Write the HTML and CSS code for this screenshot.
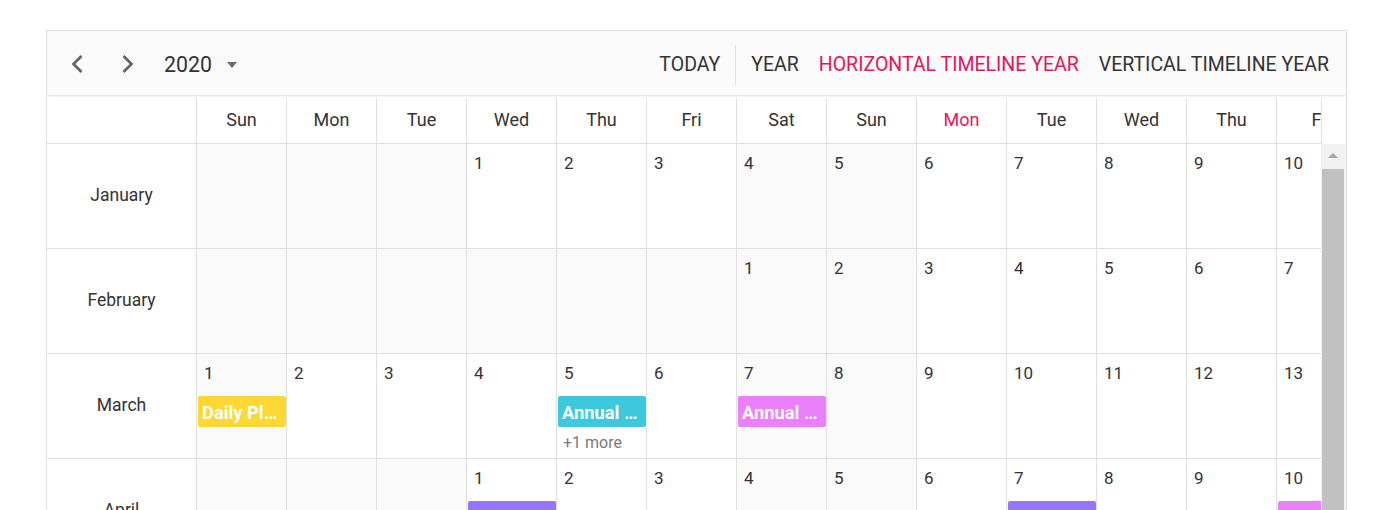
FILE: index.html
```html
<!DOCTYPE html>
<html>
<head>
<meta charset="utf-8">
<link rel="stylesheet" href="styles.css">
</head>
<body>
<div class="scheduler">
  <div class="toolbar">
    <div class="tb-left">
      <button class="icon-btn"><svg width="12" height="20" viewBox="0 0 12 20"><path d="M10.5 2 L2.5 10 L10.5 18" fill="none" stroke="#616161" stroke-width="2.6"/></svg></button>
      <button class="icon-btn"><svg width="12" height="20" viewBox="0 0 12 20"><path d="M1.5 2 L9.5 10 L1.5 18" fill="none" stroke="#616161" stroke-width="2.6"/></svg></button>
      <div class="date-range"><span class="year">2020</span><span class="caret"></span></div>
    </div>
    <div class="tb-right">
      <button class="tb-btn">TODAY</button>
      <span class="sep"></span>
      <button class="tb-btn">YEAR</button>
      <button class="tb-btn active">HORIZONTAL TIMELINE YEAR</button>
      <button class="tb-btn">VERTICAL TIMELINE YEAR</button>
    </div>
  </div>
  <div class="body">
    <div class="main">
      <div class="row header">
        <div class="label-cell"></div>
        <div class="day-head">Sun</div>
        <div class="day-head">Mon</div>
        <div class="day-head">Tue</div>
        <div class="day-head">Wed</div>
        <div class="day-head">Thu</div>
        <div class="day-head">Fri</div>
        <div class="day-head">Sat</div>
        <div class="day-head">Sun</div>
        <div class="day-head today">Mon</div>
        <div class="day-head">Tue</div>
        <div class="day-head">Wed</div>
        <div class="day-head">Thu</div>
        <div class="day-head">Fri</div>
      </div>
      <div class="row month">
        <div class="label-cell month-name">January</div>
        <div class="cell off"></div>
        <div class="cell off"></div>
        <div class="cell off"></div>
        <div class="cell"><span class="date">1</span></div>
        <div class="cell"><span class="date">2</span></div>
        <div class="cell"><span class="date">3</span></div>
        <div class="cell off"><span class="date">4</span></div>
        <div class="cell off"><span class="date">5</span></div>
        <div class="cell"><span class="date">6</span></div>
        <div class="cell"><span class="date">7</span></div>
        <div class="cell"><span class="date">8</span></div>
        <div class="cell"><span class="date">9</span></div>
        <div class="cell"><span class="date">10</span></div>
      </div>
      <div class="row month">
        <div class="label-cell month-name">February</div>
        <div class="cell off"></div>
        <div class="cell off"></div>
        <div class="cell off"></div>
        <div class="cell off"></div>
        <div class="cell off"></div>
        <div class="cell off"></div>
        <div class="cell off"><span class="date">1</span></div>
        <div class="cell off"><span class="date">2</span></div>
        <div class="cell"><span class="date">3</span></div>
        <div class="cell"><span class="date">4</span></div>
        <div class="cell"><span class="date">5</span></div>
        <div class="cell"><span class="date">6</span></div>
        <div class="cell"><span class="date">7</span></div>
      </div>
      <div class="row month">
        <div class="label-cell month-name">March</div>
        <div class="cell off"><span class="date">1</span><div class="event yellow">Daily Planning Meeting</div></div>
        <div class="cell"><span class="date">2</span></div>
        <div class="cell"><span class="date">3</span></div>
        <div class="cell"><span class="date">4</span></div>
        <div class="cell"><span class="date">5</span><div class="event cyan">Annual Conference</div><div class="more">+1 more</div></div>
        <div class="cell"><span class="date">6</span></div>
        <div class="cell off"><span class="date">7</span><div class="event pink">Annual Conference</div></div>
        <div class="cell off"><span class="date">8</span></div>
        <div class="cell"><span class="date">9</span></div>
        <div class="cell"><span class="date">10</span></div>
        <div class="cell"><span class="date">11</span></div>
        <div class="cell"><span class="date">12</span></div>
        <div class="cell"><span class="date">13</span></div>
      </div>
      <div class="row month">
        <div class="label-cell month-name">April</div>
        <div class="cell off"></div>
        <div class="cell off"></div>
        <div class="cell off"></div>
        <div class="cell"><span class="date">1</span><div class="event purple">Project Review</div></div>
        <div class="cell"><span class="date">2</span></div>
        <div class="cell"><span class="date">3</span></div>
        <div class="cell off"><span class="date">4</span></div>
        <div class="cell off"><span class="date">5</span></div>
        <div class="cell"><span class="date">6</span></div>
        <div class="cell"><span class="date">7</span><div class="event purple">Project Review</div></div>
        <div class="cell"><span class="date">8</span></div>
        <div class="cell"><span class="date">9</span></div>
        <div class="cell"><span class="date">10</span><div class="event pink">Annual Conference</div></div>
      </div>
    </div>
    <div class="scroll-col">
      <div class="scroll-spacer"></div>
      <div class="scrollbar">
        <div class="arrow-up"><span class="tri"></span></div>
        <div class="thumb"></div>
      </div>
    </div>
  </div>
</div>
</body>
</html>
```

FILE: styles.css
```css
* { box-sizing: border-box; }
html, body {
  margin: 0;
  padding: 0;
  background: #fff;
  overflow: hidden;
  height: 510px;
}
body {
  font-family: Roboto, "Liberation Sans", sans-serif;
  color: #333;
}
button {
  font-family: inherit;
  border: 0;
  background: transparent;
  cursor: pointer;
  padding: 0;
  margin: 0;
}
.scheduler {
  margin: 30px 0 0 46px;
  width: 1301px;
  border: 1px solid #e0e0e0;
  border-bottom: 0;
  height: 480px;
  overflow: hidden;
}
.toolbar {
  height: 64px;
  padding-top: 2px;
  background: #fafafa;
  display: flex;
  align-items: center;
  justify-content: space-between;
  box-shadow: 0 1px 2px rgba(0, 0, 0, 0.14);
  margin-bottom: 3px;
  position: relative;
  z-index: 1;
}
.tb-left {
  display: flex;
  align-items: center;
  padding-left: 24px;
}
.icon-btn {
  width: 51px;
  height: 40px;
  display: flex;
  align-items: center;
  justify-content: flex-start;
}
.icon-btn svg { display: block; }
.date-range {
  display: flex;
  align-items: center;
  margin-left: -9px;
}
.year {
  font-size: 21.3px;
  color: #333;
}
.caret {
  width: 0;
  height: 0;
  border-left: 5px solid transparent;
  border-right: 5px solid transparent;
  border-top: 6px solid #6b6b6b;
  margin-left: 15px;
  margin-top: 1px;
}
.tb-right {
  display: flex;
  align-items: center;
  padding-right: 7px;
  padding-top: 2px;
}
.tb-btn {
  font-size: 19.5px;
  color: #333;
  padding: 0 10px;
  height: 40px;
  line-height: 40px;
}
.tb-btn.active { color: #e3165b; }
.sep {
  width: 1px;
  height: 40px;
  background: #e0e0e0;
  margin: 0 5px;
}
.body {
  display: flex;
}
.main {
  width: 1274px;
  overflow: hidden;
  flex-shrink: 0;
}
.row {
  display: flex;
}
.row > div { flex-shrink: 0; }
.label-cell {
  width: 150px;
  border-right: 1px solid #e0e0e0;
  border-bottom: 1px solid #e0e0e0;
  background: #fff;
}
.header { height: 46px; }
.header .label-cell { height: 46px; }
.day-head {
  width: 90px;
  height: 46px;
  border-right: 1px solid #e0e0e0;
  border-bottom: 1px solid #e0e0e0;
  font-size: 18px;
  text-align: center;
  line-height: 43px;
  color: #333;
}
.day-head.today { color: #e3165b; }
.month { height: 105px; }
.month-name {
  height: 105px;
  display: flex;
  align-items: center;
  justify-content: center;
  font-size: 17.5px;
  padding-bottom: 2px;
}
.cell {
  width: 90px;
  height: 105px;
  border-right: 1px solid #e0e0e0;
  border-bottom: 1px solid #e0e0e0;
  background: #fff;
  padding-top: 9px;
  overflow: hidden;
}
.cell.off { background: #fafafa; }
.date {
  display: block;
  font-size: 17px;
  line-height: 20px;
  padding-left: 7px;
  color: #333;
}
.event {
  margin: 13px 0 0 1px;
  height: 31px;
  line-height: 34px;
  border-radius: 2px;
  color: #fff;
  font-weight: 700;
  font-size: 18.3px;
  padding: 0 3px 0 4px;
  white-space: nowrap;
  overflow: hidden;
  text-overflow: ellipsis;
}
.yellow { background: #fdd835; }
.cyan { background: #3bc9db; }
.pink { background: #ea80fc; }
.purple { background: #9775fa; }
.more {
  font-size: 16px;
  color: #7a7a7a;
  padding-left: 6px;
  margin-top: 6px;
  line-height: 20px;
}
.scroll-col {
  width: 25px;
  flex-shrink: 0;
}
.scroll-spacer {
  height: 46px;
  background: #fff;
  border-left: 1px solid #e0e0e0;
}
.scrollbar {
  background: #f1f1f1;
  height: 400px;
  padding: 0 2px 0 1px;
}
.arrow-up {
  height: 25px;
  display: flex;
  align-items: center;
  justify-content: center;
  padding-bottom: 2px;
}
.tri {
  width: 0;
  height: 0;
  border-left: 5px solid transparent;
  border-right: 5px solid transparent;
  border-bottom: 5px solid #a3a3a3;
}
.thumb {
  background: #c1c1c1;
  height: 360px;
}
```
